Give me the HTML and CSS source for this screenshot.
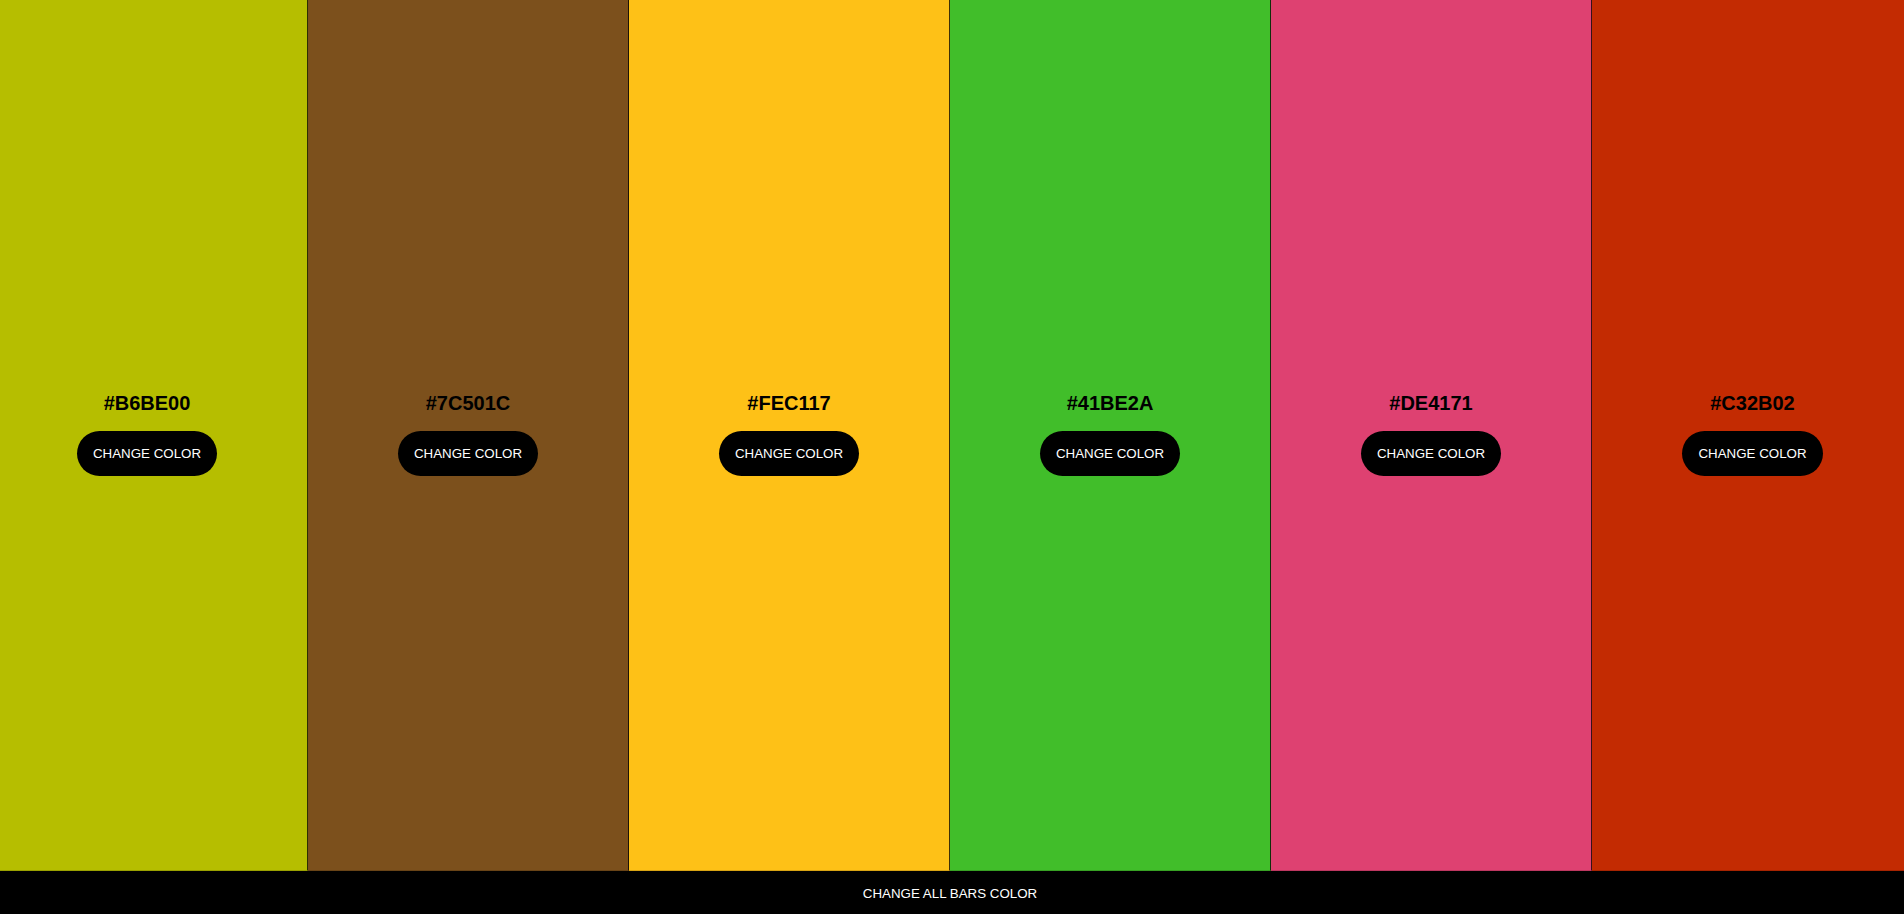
FILE: index.html
```html
<!DOCTYPE html>
<html lang="en">
<head>
<meta charset="utf-8">
<title>Color Bars</title>
<link rel="stylesheet" href="styles.css">
</head>
<body>
<div class="page">
  <main class="bars">
    <section class="bar bar-1">
      <h2 class="bar-title">#B6BE00</h2>
      <button class="bar-btn">CHANGE COLOR</button>
    </section>
    <section class="bar bar-2">
      <h2 class="bar-title">#7C501C</h2>
      <button class="bar-btn">CHANGE COLOR</button>
    </section>
    <section class="bar bar-3">
      <h2 class="bar-title">#FEC117</h2>
      <button class="bar-btn">CHANGE COLOR</button>
    </section>
    <section class="bar bar-4">
      <h2 class="bar-title">#41BE2A</h2>
      <button class="bar-btn">CHANGE COLOR</button>
    </section>
    <section class="bar bar-5">
      <h2 class="bar-title">#DE4171</h2>
      <button class="bar-btn">CHANGE COLOR</button>
    </section>
    <section class="bar bar-6">
      <h2 class="bar-title">#C32B02</h2>
      <button class="bar-btn">CHANGE COLOR</button>
    </section>
  </main>
  <button class="all-btn">CHANGE ALL BARS COLOR</button>
</div>
</body>
</html>
```
FILE: styles.css
```css
html, body {
  margin: 0;
  padding: 0;
  height: 100%;
  overflow: hidden;
  background: #000;
  font-family: "Liberation Sans", Arial, sans-serif;
}

.page {
  display: flex;
  flex-direction: column;
  width: 1926px;
  height: 914px;
  margin-left: -13px;
}

.bars {
  display: flex;
  height: 871px;
}

.bar {
  box-sizing: border-box;
  width: 321px;
  flex: 0 0 321px;
  height: 100%;
  display: flex;
  flex-direction: column;
  align-items: center;
  justify-content: center;
  border-right: 1px solid rgba(0, 0, 0, 0.75);
  border-bottom: 1px solid rgba(0, 0, 0, 0.15);
}

.bar-6 { border-right: none; }

.bar-1 { background: #B6BE00; }
.bar-2 { background: #7C501C; }
.bar-3 { background: #FEC117; }
.bar-4 { background: #41BE2A; }
.bar-5 { background: #DE4171; }
.bar-6 { background: #C32B02; }

.bar-title {
  margin: -2px 0 16px 0;
  font-size: 20px;
  line-height: 23px;
  font-weight: bold;
  color: #000;
}

.bar-btn {
  font-family: "Liberation Sans", Arial, sans-serif;
  font-size: 13.333px;
  line-height: 15px;
  color: #fff;
  background: #000;
  border: none;
  border-radius: 23px;
  padding: 15px 16px;
  cursor: pointer;
}

.all-btn {
  flex: 1;
  width: 100%;
  font-family: "Liberation Sans", Arial, sans-serif;
  font-size: 13.333px;
  line-height: 15px;
  color: #fff;
  background: #000;
  border: none;
  padding: 2px 0 0 0;
  cursor: pointer;
}
```
